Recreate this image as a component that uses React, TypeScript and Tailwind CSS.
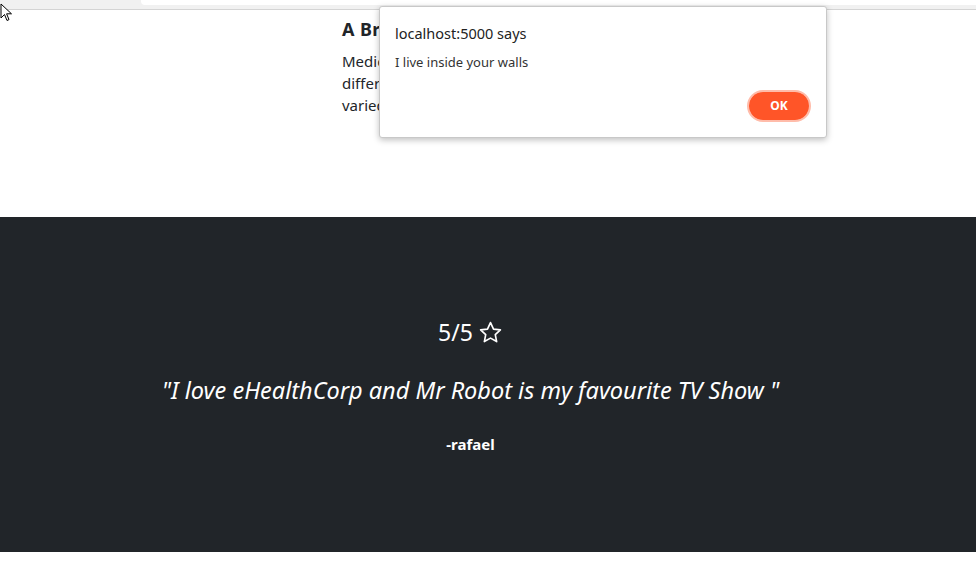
import React from "react";

export default function App() {
  const font = { fontFamily: '"Noto Sans", "Open Sans", sans-serif' };
  return (
    <div className="relative w-[976px] h-[583px] overflow-hidden bg-white" style={font}>
      {/* browser top strip */}
      <div className="relative h-[10px] bg-[#f1f1f1] border-b border-[#d4d4d4]">
        <div className="absolute left-[141px] right-0 top-0 h-[5px] bg-white rounded-bl-[4px]" />
      </div>

      {/* content section */}
      <div className="h-[207px] flex justify-center">
        <div className="w-[480px] ml-[188px] pt-[7px] text-[#212529]">
          <h4 className="text-[18px] font-bold leading-[24px] mb-[9px] tracking-[0.4px]">A Brief History of Medicine</h4>
          <p className="text-[15px] leading-[22px]">
            <span className="block whitespace-nowrap">Medicine has evolved over the centuries in many</span>
            <span className="block whitespace-nowrap">different ways across many cultures, with</span>
            <span className="block whitespace-nowrap">varied practices and approaches to healing.</span>
          </p>
        </div>
      </div>

      {/* dark testimonial section */}
      <div className="h-[335px] bg-[#212529] flex flex-col items-center text-white pr-[35px]">
        <div className="mt-[100px] flex items-center gap-[5px] text-[23px] leading-[30px]">
          <span>5/5</span>
          <svg width="25" height="25" viewBox="0 0 24 24" fill="none" stroke="white" strokeWidth="1.6" strokeLinejoin="round">
            <path d="M12 2.5l2.9 6.2 6.6.8-4.9 4.6 1.3 6.6L12 17.4l-5.9 3.3 1.3-6.6-4.9-4.6 6.6-.8z" />
          </svg>
        </div>
        <p className="mt-[27px] italic text-[23.5px] leading-[32px]">
          "I love eHealthCorp and Mr Robot is my favourite TV Show "
        </p>
        <p className="mt-[28px] font-bold text-[15px] leading-[20px]">-rafael</p>
      </div>

      {/* alert dialog */}
      <div className="absolute left-[379px] top-[6px] w-[448px] h-[132px] bg-white border border-[#c8c8c8] rounded-[3px] shadow-[0_2px_6px_rgba(0,0,0,0.25)]">
        <div className="pl-[15px] pt-[16px] text-[14.5px] leading-[20px] text-[#222]">localhost:5000 says</div>
        <div className="pl-[15px] pt-[10px] text-[13px] leading-[18px] text-[#333]">I live inside your walls</div>
        <div className="absolute right-[15px] top-[83px] rounded-full border-[2px] border-[#ffbcaa]">
          <div className="w-[60px] h-[28px] rounded-full bg-[#ff5528] flex items-center justify-center text-white text-[12px] font-bold">
            OK
          </div>
        </div>
      </div>

      {/* mouse cursor */}
      <svg className="absolute left-0 top-[3px]" width="14" height="20" viewBox="0 0 14 20">
        <path d="M1 1 L1 15 L4.5 11.5 L7 17.5 L9 16.6 L6.6 10.8 L11.5 10.8 Z" fill="white" stroke="black" strokeWidth="1" strokeLinejoin="round" />
      </svg>
    </div>
  );
}
